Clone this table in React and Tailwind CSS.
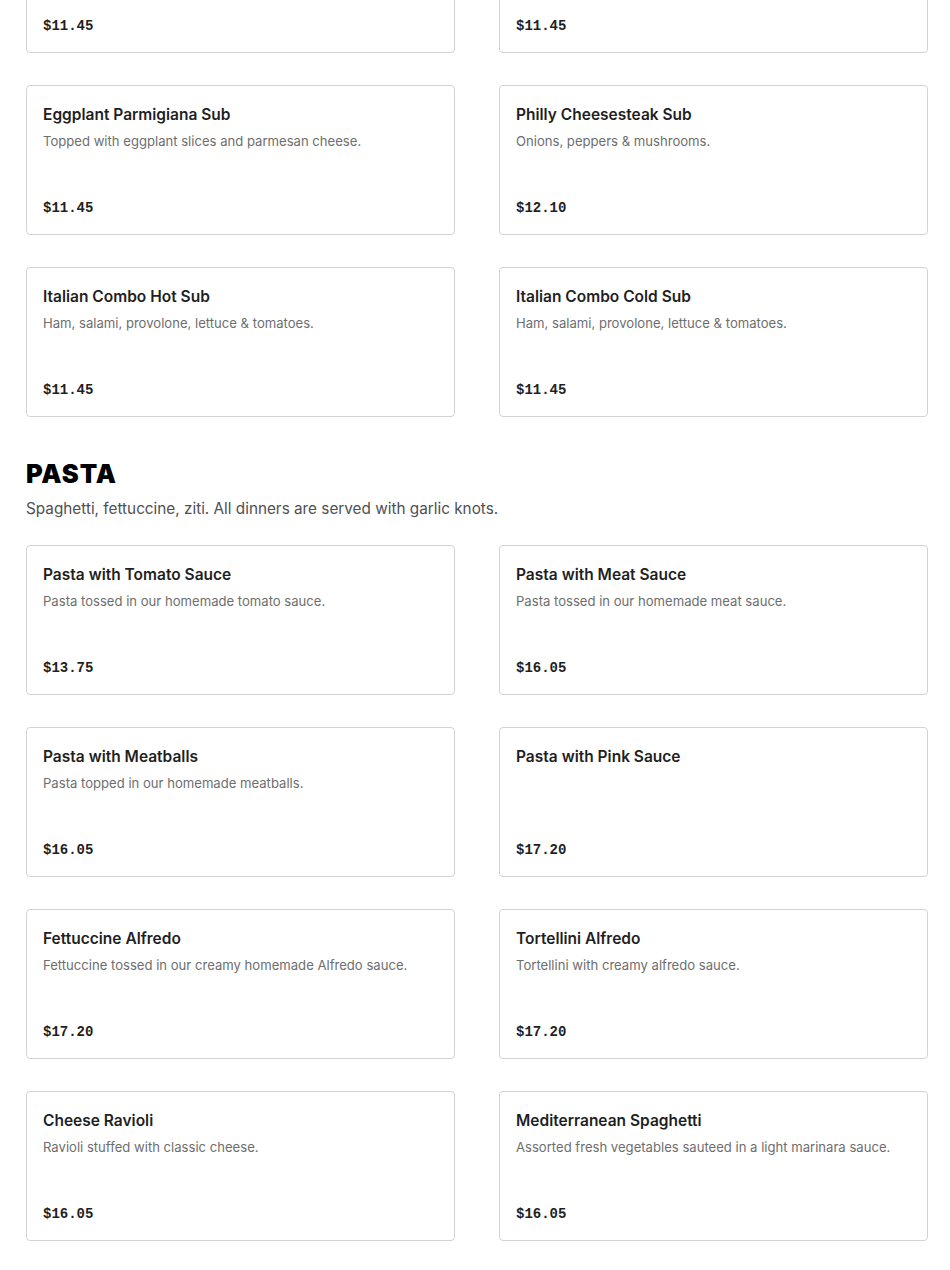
import React from 'react';

const subs = [
  { name: '', desc: '', price: '$11.45' },
  { name: '', desc: '', price: '$11.45' },
  { name: 'Eggplant Parmigiana Sub', desc: 'Topped with eggplant slices and parmesan cheese.', price: '$11.45' },
  { name: 'Philly Cheesesteak Sub', desc: 'Onions, peppers & mushrooms.', price: '$12.10' },
  { name: 'Italian Combo Hot Sub', desc: 'Ham, salami, provolone, lettuce & tomatoes.', price: '$11.45' },
  { name: 'Italian Combo Cold Sub', desc: 'Ham, salami, provolone, lettuce & tomatoes.', price: '$11.45' },
];

const pasta = [
  { name: 'Pasta with Tomato Sauce', desc: 'Pasta tossed in our homemade tomato sauce.', price: '$13.75' },
  { name: 'Pasta with Meat Sauce', desc: 'Pasta tossed in our homemade meat sauce.', price: '$16.05' },
  { name: 'Pasta with Meatballs', desc: 'Pasta topped in our homemade meatballs.', price: '$16.05' },
  { name: 'Pasta with Pink Sauce', desc: '', price: '$17.20' },
  { name: 'Fettuccine Alfredo', desc: 'Fettuccine tossed in our creamy homemade Alfredo sauce.', price: '$17.20' },
  { name: 'Tortellini Alfredo', desc: 'Tortellini with creamy alfredo sauce.', price: '$17.20' },
  { name: 'Cheese Ravioli', desc: 'Ravioli stuffed with classic cheese.', price: '$16.05' },
  { name: 'Mediterranean Spaghetti', desc: 'Assorted fresh vegetables sauteed in a light marinara sauce.', price: '$16.05' },
];

const MenuCard = ({ item }) => (
  <div className="h-[150px] flex flex-col border border-[#d3d3d3] rounded-[4px] bg-white px-4 pt-4 pb-4">
    {item.name && <h4 className="mt-px text-[15.5px] leading-6 font-semibold text-[#1f1f1f]">{item.name}</h4>}
    {item.desc && <p className="mt-[3px] text-[13.1px] leading-[22px] text-[#6e6e6e]">{item.desc}</p>}
    <span className="mt-auto text-[14px] leading-5 font-bold text-[#1f1f1f] font-['Liberation_Mono',monospace]">
      {item.price}
    </span>
  </div>
);

export default function App() {
  return (
    <div className="min-h-[1270px] bg-white font-['Inter','Noto_Sans',sans-serif] overflow-hidden">
      <div className="px-[26px] w-[954px] -mt-[97px]">
        <div className="grid grid-cols-2 gap-x-[44px] gap-y-8">
          {subs.map((item, i) => <MenuCard key={i} item={item} />)}
        </div>

        <section className="mt-[41px]">
          <h2 className="text-[25.5px] leading-8 font-black tracking-[0.035em] text-black">PASTA</h2>
          <p className="mt-[7px] text-[15.3px] leading-6 text-[#505050]">
            Spaghetti, fettuccine, ziti. All dinners are served with garlic knots.
          </p>
          <div className="mt-6 grid grid-cols-2 gap-x-[44px] gap-y-8">
            {pasta.map((item, i) => <MenuCard key={i} item={item} />)}
          </div>
        </section>
      </div>
    </div>
  );
}
